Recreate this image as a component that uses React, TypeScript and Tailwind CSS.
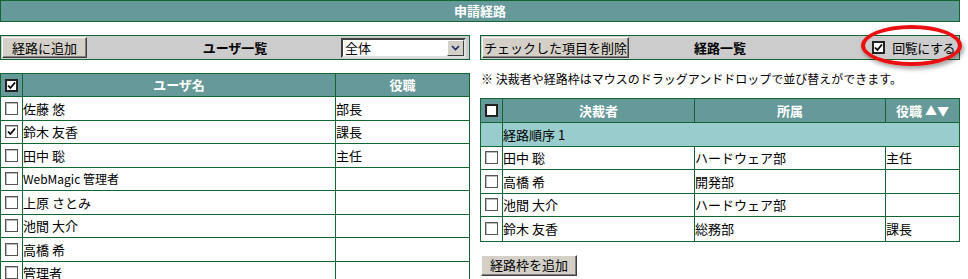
import React from 'react';

const font = { fontFamily: '"Noto Sans CJK JP", "Liberation Sans", sans-serif' };

interface CheckProps {
  checked?: boolean;
  heavy?: boolean;
}

const CheckBox: React.FC<CheckProps> = ({ checked, heavy }) => (
  <span
    className={
      heavy
        ? 'flex h-[13px] w-[13px] items-center justify-center border-2 border-[#222] bg-white'
        : 'flex h-[13px] w-[13px] items-center justify-center border border-[#555] bg-white shadow-[inset_1px_1px_0_#bbb]'
    }
  >
    {checked && (
      <svg width="9" height="9" viewBox="0 0 9 9">
        <path d="M1 4.5 L3.4 7 L8 1.5" fill="none" stroke="#000" strokeWidth="1.8" />
      </svg>
    )}
  </span>
);

const Button: React.FC<{ label: string; className?: string }> = ({ label, className }) => (
  <div
    className={
      'flex h-[21px] items-center justify-center border border-t-white border-l-white border-b-[#404040] border-r-[#404040] bg-[#d4d0c8] text-[13px] text-black shadow-[inset_-1px_-1px_0_#808080] ' +
      (className ?? '')
    }
  >
    {label}
  </div>
);

const users = [
  { name: '佐藤 悠', role: '部長', checked: false },
  { name: '鈴木 友香', role: '課長', checked: true },
  { name: '田中 聡', role: '主任', checked: false },
  { name: 'WebMagic 管理者', role: '', checked: false, small: true },
  { name: '上原 さとみ', role: '', checked: false },
  { name: '池間 大介', role: '', checked: false },
  { name: '高橋 希', role: '', checked: false },
  { name: '管理者', role: '', checked: false },
];

const route = [
  { name: '田中 聡', dept: 'ハードウェア部', role: '主任' },
  { name: '高橋 希', dept: '開発部', role: '' },
  { name: '池間 大介', dept: 'ハードウェア部', role: '' },
  { name: '鈴木 友香', dept: '総務部', role: '課長' },
];

export default function App() {
  return (
    <div className="relative h-[279px] w-[968px] overflow-hidden bg-white text-[13px] text-black" style={font}>
      <div className="flex h-[22px] w-[960px] items-center justify-center border border-[#116633] bg-[#669999] font-bold text-white">
        申請経路
      </div>

      <div className="mt-[13px] flex gap-[10px]">
        {/* ユーザ一覧 */}
        <div className="w-[470px]">
          <div className="grid h-[25px] grid-cols-[1fr_auto_1fr] items-center border border-[#116633] bg-[#cccccc] px-[1px]">
            <div>
              <Button label="経路に追加" className="w-[85px]" />
            </div>
            <div className="font-bold">ユーザ一覧</div>
            <div className="flex justify-end pr-[2px]">
              <div className="flex h-[20px] w-[125px] border-2 border-t-[#404040] border-l-[#404040] border-b-[#e0e0e0] border-r-[#e0e0e0] bg-white">
                <div className="flex flex-1 items-center pl-[2px] leading-none">全体</div>
                <div className="flex w-[17px] items-center justify-center border border-t-white border-l-white border-b-[#404040] border-r-[#404040] bg-[#d4d0c8]">
                  <svg width="9" height="6" viewBox="0 0 9 6">
                    <path d="M1 1 L4.5 4.5 L8 1" fill="none" stroke="#1a2a66" strokeWidth="1.6" />
                  </svg>
                </div>
              </div>
            </div>
          </div>

          <div className="mt-[13px] border border-[#116633]">
            <div className="flex h-[23px] border-b border-[#116633] bg-[#669999] font-bold text-white">
              <div className="flex w-[21px] items-center justify-center">
                <CheckBox checked heavy />
              </div>
              <div className="flex w-[313px] items-center justify-center border-l border-[#116633]">ユーザ名</div>
              <div className="flex flex-1 items-center justify-center border-l border-[#116633]">役職</div>
            </div>
            {users.map((u, i) => (
              <div key={i} className="flex h-[23.5px] border-b border-[#116633]">
                <div className="flex w-[21px] items-center justify-center">
                  <CheckBox checked={u.checked} />
                </div>
                <div className={'flex w-[313px] items-center border-l border-[#116633] ' + (u.small ? 'text-[12px]' : '')}>
                  {u.name}
                </div>
                <div className="flex flex-1 items-center border-l border-[#116633]">{u.role}</div>
              </div>
            ))}
          </div>
        </div>

        {/* 経路一覧 */}
        <div className="w-[480px]">
          <div className="grid h-[25px] grid-cols-[1fr_auto_1fr] items-center border border-[#116633] bg-[#cccccc] px-[1px]">
            <div>
              <Button label="チェックした項目を削除" className="w-[147px]" />
            </div>
            <div className="font-bold">経路一覧</div>
            <div className="flex items-center justify-end gap-[7px] pr-[3px]">
              <CheckBox checked heavy />
              <span className="tracking-[-0.5px]">回覧にする</span>
            </div>
          </div>

          <div className="flex h-[38px] items-center pl-[1px] text-[12px]">
            ※ 決裁者や経路枠はマウスのドラッグアンドドロップで並び替えができます。
          </div>

          <div className="border border-[#116633]">
            <div className="flex h-[24px] border-b border-[#116633] bg-[#669999] font-bold text-white">
              <div className="flex w-[21px] items-center justify-center">
                <CheckBox heavy />
              </div>
              <div className="flex w-[192px] items-center justify-center border-l border-[#116633]">決裁者</div>
              <div className="flex w-[191px] items-center justify-center border-l border-[#116633]">所属</div>
              <div className="flex flex-1 items-center justify-center gap-[3px] border-l border-[#116633]">
                役職
                <span className="text-[12px] leading-none">▲▼</span>
              </div>
            </div>
            <div className="flex h-[23.5px] border-b border-[#116633] bg-[#99cccc]">
              <div className="w-[21px]" />
              <div className="flex flex-1 items-center border-l border-[#116633]">経路順序 1</div>
            </div>
            {route.map((r, i) => (
              <div
                key={i}
                className={'flex h-[23.5px] ' + (i < route.length - 1 ? 'border-b border-[#116633]' : '')}
              >
                <div className="flex w-[21px] items-center justify-center">
                  <CheckBox />
                </div>
                <div className="flex w-[192px] items-center border-l border-[#116633]">{r.name}</div>
                <div className="flex w-[191px] items-center border-l border-[#116633]">{r.dept}</div>
                <div className="flex flex-1 items-center border-l border-[#116633]">{r.role}</div>
              </div>
            ))}
          </div>

          <div className="mt-[13px] pl-[1px]">
            <Button label="経路枠を追加" className="w-[96px]" />
          </div>
        </div>
      </div>

      {/* highlight ring */}
      <div className="absolute left-[861px] top-[25px] h-[41px] w-[101px] rounded-[50%] border-[4px] border-[#e81010] shadow-[2px_3px_4px_rgba(0,0,0,0.35)]" />
    </div>
  );
}
